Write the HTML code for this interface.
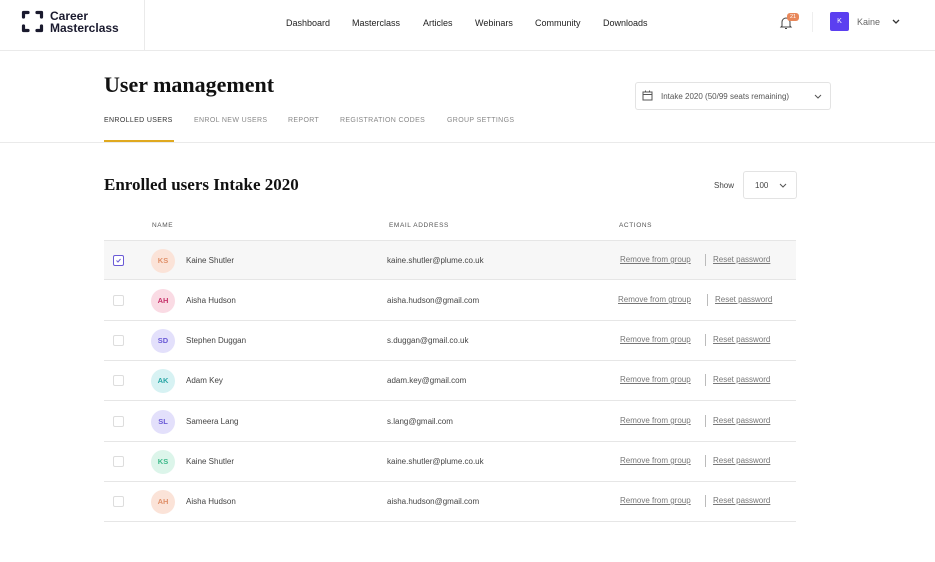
<!DOCTYPE html>
<html><head><meta charset="utf-8"><style>
*{box-sizing:border-box;margin:0;padding:0}
body{width:935px;height:562px;background:#fff;font-family:"Liberation Sans",sans-serif;color:#222;position:relative;overflow:hidden}
.a{position:absolute;white-space:nowrap}
.nav{font-size:9px;color:#222;top:18px}
.tab{font-size:7px;letter-spacing:.35px;color:#888;top:117px}
.row{position:absolute;left:104px;width:692px;height:40px;border-bottom:1px solid #e6e6e6}
.cb{position:absolute;left:9px;top:14px;width:11px;height:11px;border:1px solid #ddd;border-radius:2px;background:#fff}
.av{position:absolute;left:47px;top:8px;width:24px;height:24px;border-radius:50%;font-size:7.5px;font-weight:bold;text-align:center;line-height:24px}
.nm{position:absolute;left:82px;top:15px;font-size:8px;color:#444}
.em{position:absolute;left:283px;top:15px;font-size:8px;color:#444}
.ac{position:absolute;left:516px;top:14px;font-size:8px;color:#777;text-decoration:underline}
.sp{position:absolute;left:601px;top:13px;width:1px;height:12px;background:#bbb}
.rp{position:absolute;left:609px;top:14px;font-size:8px;color:#777;text-decoration:underline}
.serif{font-family:"Liberation Serif",serif;font-weight:bold;color:#111}
</style></head><body>
<div class="a" style="left:0;top:50px;width:935px;height:1px;background:#eaeaea"></div>
<div class="a" style="left:144px;top:0;width:1px;height:50px;background:#eaeaea"></div>
<svg class="a" style="left:20px;top:10px" width="25" height="23" viewBox="0 0 25 23"><g fill="none" stroke="#1a1a2e" stroke-width="3.2" stroke-linecap="round" stroke-linejoin="round"><path d="M8 2.5H3.5V7"/><path d="M17 2.5h4.5V7"/><path d="M8 20.5H3.5V16"/><path d="M17 20.5h4.5V16"/></g></svg>
<div class="a" style="left:50px;top:10px;font-size:12px;font-weight:bold;line-height:12px;color:#1a1a2e">Career<br>Masterclass</div>
<div class="a nav" style="left:286px">Dashboard</div>
<div class="a nav" style="left:352px">Masterclass</div>
<div class="a nav" style="left:423px">Articles</div>
<div class="a nav" style="left:475px">Webinars</div>
<div class="a nav" style="left:535px">Community</div>
<div class="a nav" style="left:603px">Downloads</div>
<svg class="a" style="left:779px;top:16px" width="14" height="14" viewBox="0 0 14 14"><path d="M3 10V6a4 4 0 0 1 8 0v4l1 1H2zM6 12.5h2" fill="none" stroke="#444" stroke-width="1"/></svg>
<div class="a" style="left:787px;top:13px;width:12px;height:8px;border-radius:3px;background:#e8875a;color:#fff;font-size:5.5px;text-align:center;line-height:8px">21</div>
<div class="a" style="left:812px;top:12px;width:1px;height:20px;background:#eee"></div>
<div class="a" style="left:830px;top:12px;width:19px;height:19px;border-radius:2px;background:#5b3ff0;color:#fff;font-size:7px;text-align:center;line-height:19px">K</div>
<div class="a" style="left:857px;top:17px;font-size:9px;color:#666">Kaine</div>
<svg class="a" style="left:892px;top:19px" width="8" height="6"><path d="M1 1l3 3 3-3" fill="none" stroke="#333" stroke-width="1.3"/></svg>

<div class="a serif" style="left:104px;top:72px;font-size:22px">User management</div>
<div class="a tab" style="left:104px;color:#333">ENROLLED USERS</div>
<div class="a tab" style="left:194px">ENROL NEW USERS</div>
<div class="a tab" style="left:288px">REPORT</div>
<div class="a tab" style="left:340px">REGISTRATION CODES</div>
<div class="a tab" style="left:447px">GROUP SETTINGS</div>
<div class="a" style="left:104px;top:140px;width:70px;height:3px;background:#e0a91f"></div>
<div class="a" style="left:0;top:142px;width:935px;height:1px;background:#eaeaea"></div>

<div class="a" style="left:635px;top:82px;width:196px;height:28px;border:1px solid #e3e3e3;border-radius:3px"></div>
<svg class="a" style="left:642px;top:90px" width="11" height="11"><rect x="1" y="2" width="9" height="8" fill="none" stroke="#555"/><path d="M1 4.5h9M3.5 0.5v2M7.5 0.5v2" stroke="#555"/></svg>
<div class="a" style="left:661px;top:92px;font-size:8px;color:#555">Intake 2020 (50/99 seats remaining)</div>
<svg class="a" style="left:814px;top:94px" width="8" height="5"><path d="M1 1l3 3 3-3" fill="none" stroke="#555"/></svg>

<div class="a serif" style="left:104px;top:175px;font-size:17px">Enrolled users Intake 2020</div>
<div class="a" style="left:714px;top:181px;font-size:8px;color:#444">Show</div>
<div class="a" style="left:743px;top:171px;width:54px;height:28px;border:1px solid #e3e3e3;border-radius:3px"></div>
<div class="a" style="left:755px;top:181px;font-size:8px;color:#444">100</div>
<svg class="a" style="left:779px;top:183px" width="8" height="5"><path d="M1 1l3 3 3-3" fill="none" stroke="#555"/></svg>

<div class="a" style="left:152px;top:222px;font-size:6.5px;letter-spacing:.6px;color:#555">NAME</div>
<div class="a" style="left:389px;top:222px;font-size:6.5px;letter-spacing:.6px;color:#555">EMAIL ADDRESS</div>
<div class="a" style="left:619px;top:222px;font-size:6.5px;letter-spacing:.6px;color:#555">ACTIONS</div>

<div class="row" style="top:240px;background:#f7f7f7;border-top:1px solid #e6e6e6"><div class="cb" style="border-color:#6a5ad6"><svg width="9" height="9" style="position:absolute;left:0;top:0"><path d="M2.5 4.5l1.5 1.5 2.5-3" fill="none" stroke="#6a5ad6"/></svg></div><div class="av" style="background:#fbe3d8;color:#e0906a">KS</div><div class="nm">Kaine Shutler</div><div class="em">kaine.shutler@plume.co.uk</div><div class="ac">Remove from group</div><div class="sp"></div><div class="rp">Reset password</div></div>
<div class="row" style="top:281px"><div class="cb"></div><div class="av" style="background:#fadbe4;color:#c6336b">AH</div><div class="nm">Aisha Hudson</div><div class="em">aisha.hudson@gmail.com</div><div class="ac" style="left:514px">Remove from gtroup</div><div class="sp" style="left:603px"></div><div class="rp" style="left:611px">Reset password</div></div>
<div class="row" style="top:321px"><div class="cb"></div><div class="av" style="background:#e3e0fb;color:#6a5ad6">SD</div><div class="nm">Stephen Duggan</div><div class="em">s.duggan@gmail.co.uk</div><div class="ac">Remove from group</div><div class="sp"></div><div class="rp">Reset password</div></div>
<div class="row" style="top:361px"><div class="cb"></div><div class="av" style="background:#d7f2f3;color:#2aa6a6">AK</div><div class="nm">Adam Key</div><div class="em">adam.key@gmail.com</div><div class="ac">Remove from group</div><div class="sp"></div><div class="rp">Reset password</div></div>
<div class="row" style="top:402px"><div class="cb"></div><div class="av" style="background:#e3e0fb;color:#6a5ad6">SL</div><div class="nm">Sameera Lang</div><div class="em">s.lang@gmail.com</div><div class="ac">Remove from group</div><div class="sp"></div><div class="rp">Reset password</div></div>
<div class="row" style="top:442px"><div class="cb"></div><div class="av" style="background:#dcf5ea;color:#3cb98a">KS</div><div class="nm">Kaine Shutler</div><div class="em">kaine.shutler@plume.co.uk</div><div class="ac">Remove from group</div><div class="sp"></div><div class="rp">Reset password</div></div>
<div class="row" style="top:482px"><div class="cb"></div><div class="av" style="background:#fbe3d8;color:#e0906a">AH</div><div class="nm">Aisha Hudson</div><div class="em">aisha.hudson@gmail.com</div><div class="ac">Remove from group</div><div class="sp"></div><div class="rp">Reset password</div></div>
</body></html>
